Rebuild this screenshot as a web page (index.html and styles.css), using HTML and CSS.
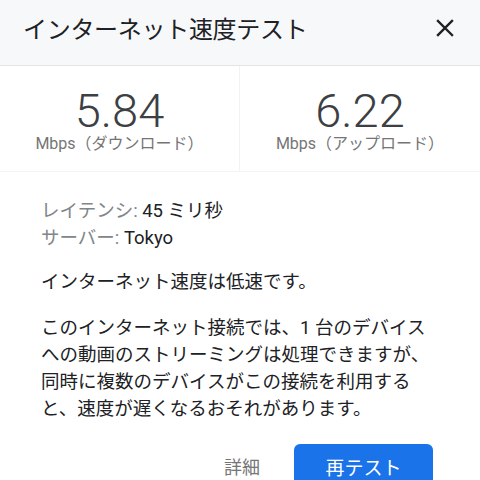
FILE: index.html
```html
<!DOCTYPE html>
<html lang="ja">
<head>
    <meta charset="UTF-8">
    <meta name="viewport" content="width=device-width, initial-scale=1.0">
    <title>インターネット速度テスト</title>
    <link rel="stylesheet" href="styles.css">
</head>
<body>
    <div class="dialog">
        <header class="dialog-header">
            <h1 class="dialog-title">インターネット速度テスト</h1>
            <button class="close-btn" aria-label="閉じる">
                <svg width="18" height="18" viewBox="0 0 18 18">
                    <path d="M2 2 L16 16 M16 2 L2 16" stroke="#202124" stroke-width="2.4" stroke-linecap="square" fill="none"/>
                </svg>
            </button>
        </header>

        <section class="stats">
            <div class="stat">
                <div class="stat-value">5.84</div>
                <div class="stat-label">Mbps（ダウンロード）</div>
            </div>
            <div class="stat">
                <div class="stat-value">6.22</div>
                <div class="stat-label">Mbps（アップロード）</div>
            </div>
        </section>

        <section class="details">
            <div class="meta">
                <div><span class="meta-label">レイテンシ:</span> 45 ミリ秒</div>
                <div><span class="meta-label">サーバー:</span> Tokyo</div>
            </div>
            <p class="summary">インターネット速度は低速です。</p>
            <p class="summary">このインターネット接続では、1 台のデバイスへの動画のストリーミングは処理できますが、同時に複数のデバイスがこの接続を利用すると、速度が遅くなるおそれがあります。</p>
        </section>

        <div class="actions">
            <button class="text-btn">詳細</button>
            <button class="primary-btn">再テスト</button>
        </div>
    </div>
</body>
</html>
```

FILE: styles.css
```css
body {
    margin: 0;
    padding: 0;
    background-color: #fff;
    font-family: Roboto, "Noto Sans CJK JP", sans-serif;
    color: #202124;
}
.dialog {
    width: 480px;
    height: 480px;
    overflow: hidden;
}
.dialog-header {
    display: flex;
    align-items: center;
    justify-content: space-between;
    height: 66px;
    padding: 0 26px 0 23px;
    background-color: #f7f8fa;
    border-bottom: 1px solid #e3e4e6;
    box-sizing: border-box;
}
.dialog-title {
    margin: 0;
    margin-top: -10px;
    font-size: 24px;
    font-weight: 400;
    color: #202124;
    letter-spacing: -0.3px;
}
.close-btn {
    margin-top: -10px;
    padding: 0;
    border: 0;
    background: none;
    display: flex;
}
.stats {
    display: grid;
    grid-template-columns: 1fr 1fr;
    height: 105px;
    border-bottom: 1px solid #f3f3f3;
}
.stat {
    display: flex;
    flex-direction: column;
    align-items: center;
    padding-top: 21px;
}
.stat:first-child {
    border-right: 1px solid #f3f3f3;
}
.stat-value {
    font-size: 47px;
    font-weight: 300;
    line-height: 48px;
    color: #3c4043;
}
.stat-label {
    font-size: 16px;
    line-height: 18px;
    color: #757575;
}
.details {
    padding: 26px 47px 0 41px;
    font-size: 18.5px;
    line-height: 27px;
}
.meta-label {
    color: #80868b;
}
.summary {
    margin: 17px 0 0;
}
.summary + .summary {
    margin-top: 19px;
}
.actions {
    display: flex;
    justify-content: flex-end;
    align-items: center;
    gap: 18px;
    padding: 21px 47px 0 0;
}
.text-btn {
    border: 0;
    background: none;
    font-family: inherit;
    font-size: 18px;
    color: #757575;
    padding: 0 16px;
}
.primary-btn {
    width: 139px;
    height: 44px;
    border: 0;
    border-radius: 6px;
    background-color: #1a73e8;
    color: #fff;
    font-family: inherit;
    font-size: 19px;
}
```
